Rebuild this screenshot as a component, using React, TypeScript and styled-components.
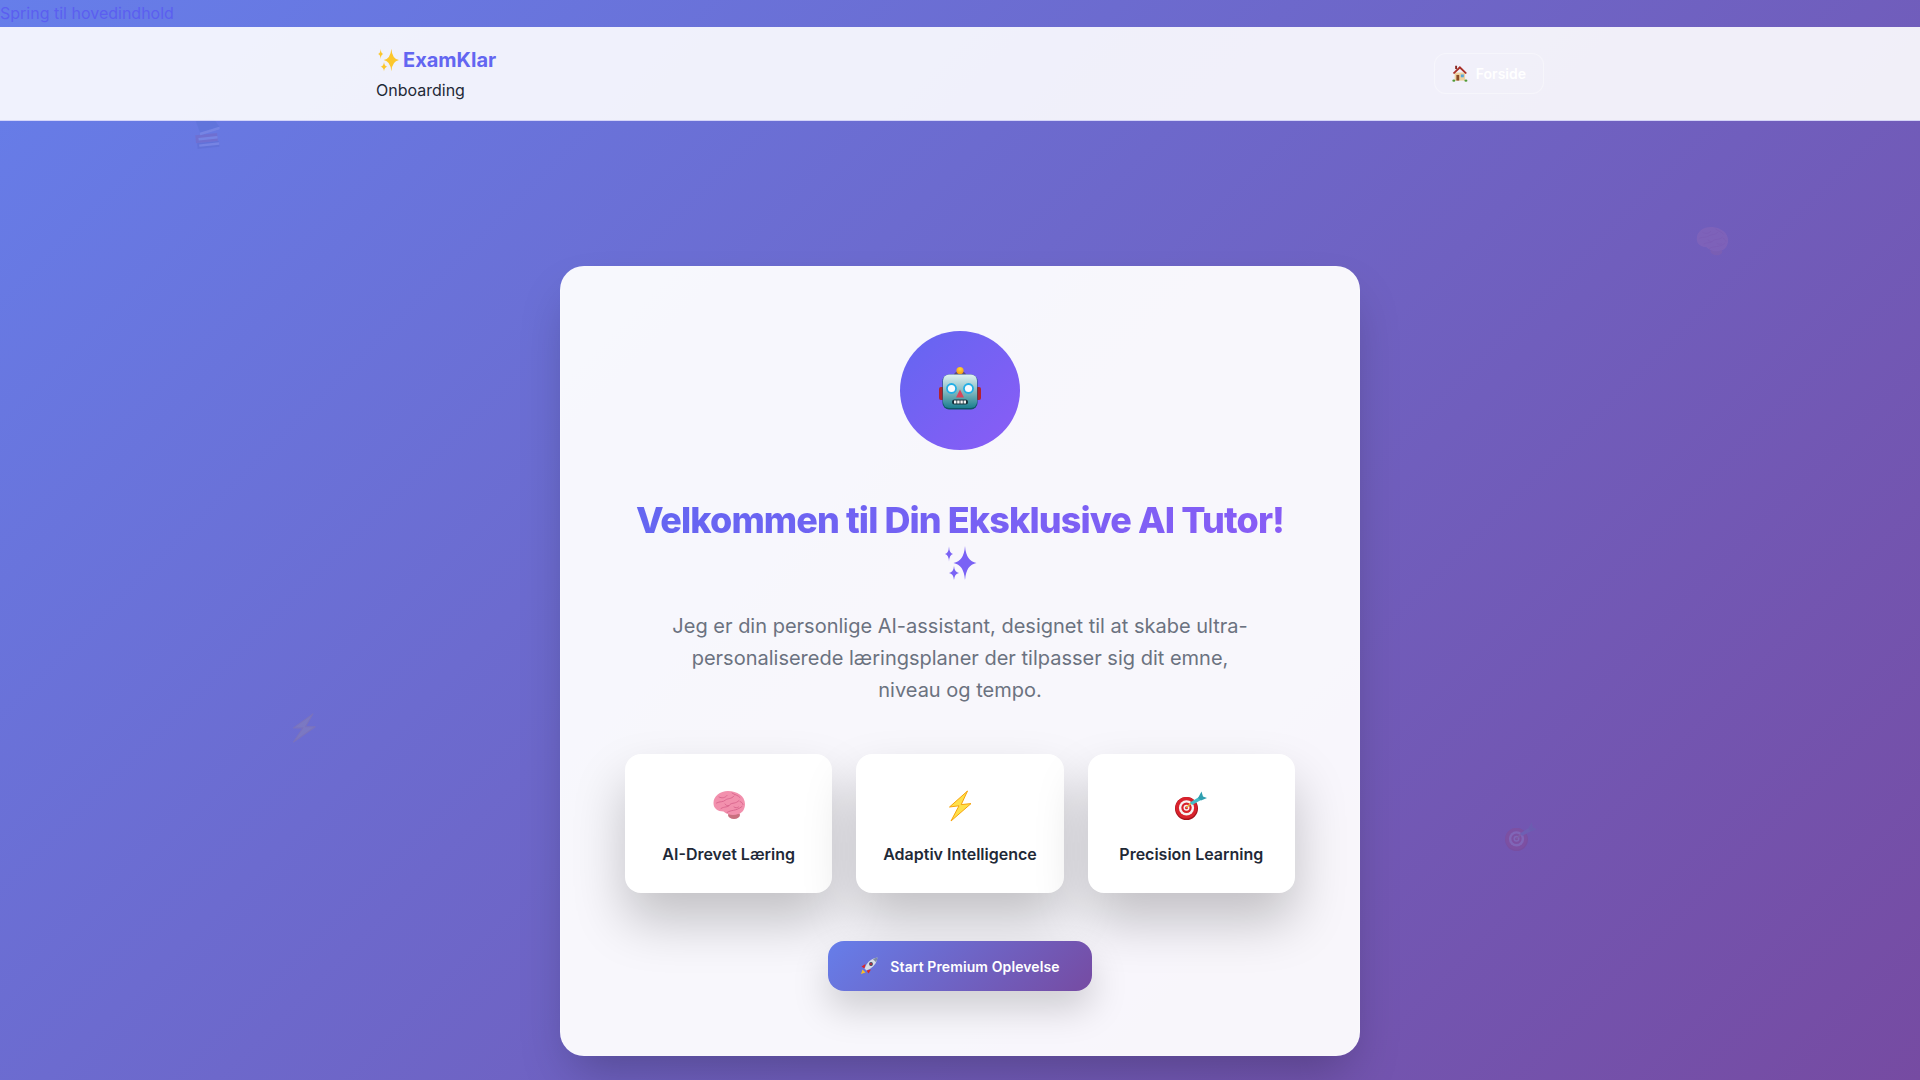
import { FC } from "react";
import styled, { createGlobalStyle } from "styled-components";

const GlobalStyle = createGlobalStyle`
* { box-sizing: border-box; }
html, body { margin: 0; padding: 0; }
body {
    font-family: Inter, "Noto Sans", sans-serif;
    background: linear-gradient(135deg, #667eea 0%, #764ba2 100%);
    min-height: 1080px;
    overflow: hidden;
}
`;

const Page = styled.div`
position: relative;
height: 1080px;
overflow: hidden;
`;

const SkipLink = styled.a`
display: block;
height: 27px;
font-size: 16px;
line-height: 26px;
color: #5b5ff0;
`;

const Header = styled.header`
position: relative;
z-index: 2;
height: 94px;
background: rgba(255, 255, 255, 0.9);
border-bottom: 1px solid rgba(99, 102, 241, 0.2);
`;

const HeaderInner = styled.div`
max-width: 1200px;
height: 100%;
margin: 0 auto;
padding: 0 16px;
display: flex;
align-items: center;
justify-content: space-between;
`;

const Brand = styled.div`
display: flex;
flex-direction: column;
gap: 3px;
`;

const Logo = styled.div`
display: flex;
align-items: center;
gap: 3px;
font-size: 20px;
line-height: 30px;
font-weight: 700;
color: #6366f1;
`;

const Subtitle = styled.div`
font-size: 16px;
line-height: 24px;
color: #1f2937;
`;

const HomeButton = styled.a`
display: flex;
align-items: center;
gap: 8px;
width: 110px;
height: 41px;
padding: 0 17px;
border: 1px solid rgba(255, 255, 255, 0.35);
border-radius: 12px;
background: rgba(255, 255, 255, 0.05);
color: #ffffff;
font-size: 14px;
font-weight: 600;
`;

const Floating = styled.span<{ $x: number; $y: number; $rotate: number }>`
position: absolute;
left: ${(p) => p.$x}px;
top: ${(p) => p.$y}px;
line-height: 0;
opacity: 0.1;
transform: rotate(${(p) => p.$rotate}deg);
`;

const Main = styled.main`
display: flex;
justify-content: center;
padding-top: 145px;
`;

const Card = styled.section`
width: 800px;
height: 790px;
padding: 64px;
border: 1px solid rgba(255, 255, 255, 0.2);
border-radius: 24px;
background: rgba(255, 255, 255, 0.95);
box-shadow: 0 25px 50px -12px rgba(0, 0, 0, 0.25);
display: flex;
flex-direction: column;
align-items: center;
text-align: center;
`;

const Avatar = styled.div`
width: 120px;
height: 120px;
border-radius: 50%;
background: linear-gradient(135deg, #6366f1, #8b5cf6);
display: flex;
align-items: center;
justify-content: center;
`;

const Title = styled.h1`
margin: 48px 0 24px;
font-size: 36px;
line-height: 44px;
font-weight: 800;
letter-spacing: -0.9px;
background: linear-gradient(135deg, #6366f1, #8b5cf6);
-webkit-background-clip: text;
background-clip: text;
color: transparent;
`;

const TitleSparkle = styled.span`
display: block;
height: 44px;
padding-top: 3px;
line-height: 0;
`;

const Lead = styled.p`
margin: 0 0 48px;
max-width: 600px;
font-size: 20px;
line-height: 32px;
color: #6b7280;
`;

const Features = styled.div`
width: 100%;
display: grid;
grid-template-columns: repeat(3, 1fr);
gap: 24px;
margin-bottom: 48px;
`;

const Feature = styled.div`
height: 139px;
padding: 36px 16px 0;
border-radius: 16px;
background: #ffffff;
box-shadow: 0 28px 52px rgba(0, 0, 0, 0.22);
`;

const FeatureIcon = styled.div`
height: 32px;
line-height: 0;
margin-bottom: 20px;
`;

const FeatureName = styled.div`
font-size: 16px;
line-height: 24px;
font-weight: 600;
color: #1f2937;
`;

const StartButton = styled.button`
width: 264px;
height: 50px;
border: 0;
border-radius: 16px;
background: linear-gradient(135deg, #667eea, #764ba2);
color: #ffffff;
font-family: inherit;
font-size: 14px;
font-weight: 600;
letter-spacing: 0.1px;
display: flex;
align-items: center;
justify-content: center;
gap: 12px;
box-shadow: 0 18px 36px rgba(0, 0, 0, 0.17);
`;

type IconProps = { size: number };

const star = (cx: number, cy: number, hw: number, hh: number) => {
    const k = 0.1;
    const ox = hw * k;
    const oy = hh * k;
    return `M${cx} ${cy - hh}Q${cx + ox} ${cy - oy} ${cx + hw} ${cy}Q${cx + ox} ${cy + oy} ${cx} ${cy + hh}Q${cx - ox} ${cy + oy} ${cx - hw} ${cy}Q${cx - ox} ${cy - oy} ${cx} ${cy - hh}Z`;
};

const Sparkles: FC<IconProps & { fill: string }> = ({ size, fill }) => (
    <svg width={size} height={size} viewBox="0 0 36 36">
        <path fill={fill} d={star(23, 18, 11.5, 17)} />
        <path fill={fill} d={star(7, 9, 4, 7.5)} />
        <path fill={fill} d={star(12, 28, 5, 7)} />
    </svg>
);

const Robot: FC<IconProps> = ({ size }) => (
    <svg width={size} height={size} viewBox="0 0 48 48">
        <defs>
            <linearGradient id="robotHead" x1="0" y1="0" x2="0" y2="1">
                <stop offset="0" stopColor="#dff1f2" />
                <stop offset="0.45" stopColor="#8fc0c6" />
                <stop offset="1" stopColor="#1c7f90" />
            </linearGradient>
            <radialGradient id="robotBall" cx="0.5" cy="0.3" r="0.7">
                <stop offset="0" stopColor="#ffd83a" />
                <stop offset="1" stopColor="#f59a12" />
            </radialGradient>
        </defs>
        <rect x="3" y="20" width="5" height="13" rx="2" fill="#b3242c" />
        <rect x="40" y="20" width="5" height="13" rx="2" fill="#b3242c" />
        <path d="M18 8.5C18 5 21 4.5 24 4.5S30 5 30 8.5Z" fill="#5a4a7a" />
        <circle cx="24" cy="3.6" r="3.6" fill="url(#robotBall)" />
        <rect x="6.5" y="7.5" width="35" height="35" rx="6.5" fill="#0f5666" />
        <rect x="7" y="7.5" width="34" height="33.5" rx="6" fill="url(#robotHead)" />
        <circle cx="15.5" cy="21.5" r="5.4" fill="#21aee6" />
        <circle cx="32.5" cy="21.5" r="5.4" fill="#21aee6" />
        <circle cx="15.5" cy="21.5" r="3.6" fill="#f6fbff" />
        <circle cx="32.5" cy="21.5" r="3.6" fill="#f6fbff" />
        <path d="M24 22.5L28 30.5H20Z" fill="#d8445c" />
        <rect x="16" y="32.5" width="16" height="5" rx="2.5" fill="#17323c" />
        <rect x="18" y="33.5" width="2.4" height="3" fill="#f4f4f4" />
        <rect x="21.2" y="33.5" width="2.4" height="3" fill="#f4f4f4" />
        <rect x="24.4" y="33.5" width="2.4" height="3" fill="#f4f4f4" />
        <rect x="27.6" y="33.5" width="2.4" height="3" fill="#f4f4f4" />
    </svg>
);

const Brain: FC<IconProps> = ({ size }) => (
    <svg width={size} height={size} viewBox="0 0 32 32">
        <ellipse cx="21" cy="25" rx="6" ry="4" fill="#c9707f" />
        <path d="M0.5 13C0.5 6 7 1 15 1C24 1 32 6 32 14C32 19.5 29 23.5 25 24C21 26 14 25 10.5 21.5C4.5 21.5 0.5 18.5 0.5 13Z" fill="#f290ad" />
        <path d="M6 7C9 8.5 12 8 14 5.5M3.5 13C7 11 10 12.5 12.5 10C15 8 18 9.5 21 6M8 18.5C11.5 16 15 18 17 14.5C19 12.5 23 14 26 10.5M14 22.5C18 19.5 23 21.5 29 16.5M19 3C21.5 5 25 5 27 7.5M12 14C13 15.5 14 16 16 15.5M21 17C22.5 18 24 18 25.5 17M27 11.5C28.5 12 29.5 13 30 14.5" fill="none" stroke="#d8648c" strokeWidth="0.9" strokeLinecap="round" />
    </svg>
);

const Bolt: FC<IconProps> = ({ size }) => (
    <svg width={size} height={size} viewBox="0 0 32 32">
        <path d="M23.5 1L5.5 17L15 15.8L7 31L27 13.6L17.2 14.6Z" fill="#ffe04a" stroke="#f7a30c" strokeWidth="1" strokeLinejoin="round" />
    </svg>
);

const Target: FC<IconProps> = ({ size }) => (
    <svg width={size} height={size} viewBox="0 0 32 32">
        <circle cx="11.5" cy="18.5" r="11.5" fill="#a5121c" />
        <circle cx="11.3" cy="17.8" r="10.8" fill="#d9222c" />
        <circle cx="11.5" cy="17.8" r="7.6" fill="#f7f3f3" />
        <circle cx="11.5" cy="17.8" r="5.2" fill="#d9222c" />
        <circle cx="11.5" cy="17.8" r="3" fill="#f7f3f3" />
        <circle cx="11.5" cy="17.8" r="1.5" fill="#d9222c" />
        <path d="M11.5 17.8L16 13" stroke="#e8b23c" strokeWidth="1.4" />
        <path d="M15 12.5L24 7L26 10L17 15Z" fill="#45bcc8" />
        <path d="M23 8L26.5 1.5L28 6.5L32 8L26 10.5Z" fill="#2f9fb0" />
    </svg>
);

const Rocket: FC<IconProps> = ({ size }) => (
    <svg width={size} height={size} viewBox="0 0 18 18">
        <path d="M1 17L2.5 12.5L5.5 15.5Z" fill="#fbbf24" />
        <path d="M1.5 9.5L5.5 7L4.5 11.5Z" fill="#dc2626" />
        <path d="M8.5 16.5L11 12.5L6.5 13.5Z" fill="#dc2626" />
        <path d="M17.5 0.5C13 1 9 3.5 6.5 7.5L4.5 11.5L6.5 13.5L10.5 11.5C14.5 9 17 5 17.5 0.5Z" fill="#d8dde6" />
        <path d="M17.5 0.5C15.5 0.7 14 1.5 13 2.2L15.8 5C16.6 4 17.3 2.5 17.5 0.5Z" fill="#7e8ba3" />
        <circle cx="11" cy="7" r="1.9" fill="#3b4257" />
        <circle cx="11" cy="7" r="1.1" fill="#c4303c" />
    </svg>
);

const House: FC<IconProps> = ({ size }) => (
    <svg width={size} height={size} viewBox="0 0 16 18">
        <rect x="2.5" y="8" width="11" height="8.5" fill="#efd2a0" />
        <path d="M0.5 8.5L8 1L15.5 8.5L14 9.5L8 4L2 9.5Z" fill="#a92f28" />
        <rect x="3" y="0.8" width="2" height="3.5" fill="#8a2a24" />
        <rect x="4.3" y="10.5" width="3" height="6" fill="#8a4a25" />
        <rect x="9" y="10" width="3.2" height="3" fill="#58a6d8" />
        <ellipse cx="1.6" cy="16.6" rx="1.6" ry="1.2" fill="#4f9a36" />
        <ellipse cx="14.4" cy="16.6" rx="1.6" ry="1.2" fill="#4f9a36" />
    </svg>
);

const Books: FC<IconProps> = ({ size }) => (
    <svg width={size} height={size} viewBox="0 0 32 32">
        <path d="M5 25H27V31H5Z" fill="#2f3f8f" />
        <path d="M7 26.5H27V29H7Z" fill="#f2f2f8" />
        <path d="M4 17H26V25H4Z" fill="#b02a4a" />
        <path d="M7 20H26V22.5H7Z" fill="#f2f2f8" />
        <path d="M6 3L24 2L29 11L9 15Z" fill="#2f5aa8" />
        <path d="M9 15L29 11V13.5L9 17.5Z" fill="#f2f2f8" />
    </svg>
);

const features = [
    { icon: <Brain size={32} />, name: "AI-Drevet Læring" },
    { icon: <Bolt size={32} />, name: "Adaptiv Intelligence" },
    { icon: <Target size={32} />, name: "Precision Learning" },
];

export const App: FC = () => {
    return (
        <>
            <GlobalStyle />
            <Page>
                <SkipLink>Spring til hovedindhold</SkipLink>
                <Header>
                    <HeaderInner>
                        <Brand>
                            <Logo><Sparkles size={24} fill="#fcc72c" /><span>ExamKlar</span></Logo>
                            <Subtitle>Onboarding</Subtitle>
                        </Brand>
                        <HomeButton><House size={17} /><span>Forside</span></HomeButton>
                    </HeaderInner>
                </Header>
                <Floating $x={191} $y={117} $rotate={-6}><Books size={32} /></Floating>
                <Floating $x={1696} $y={226} $rotate={4}><Brain size={32} /></Floating>
                <Floating $x={288} $y={712} $rotate={6}><Bolt size={32} /></Floating>
                <Floating $x={1505} $y={821} $rotate={0}><Target size={32} /></Floating>
                <Main>
                    <Card>
                        <Avatar><Robot size={48} /></Avatar>
                        <Title>
                            Velkommen til Din Eksklusive AI Tutor!
                            <TitleSparkle><Sparkles size={36} fill="#7a62f5" /></TitleSparkle>
                        </Title>
                        <Lead>Jeg er din personlige AI-assistant, designet til at skabe ultra-personaliserede læringsplaner der tilpasser sig dit emne, niveau og tempo.</Lead>
                        <Features>
                            {features.map((f) => (
                                <Feature key={f.name}>
                                    <FeatureIcon>{f.icon}</FeatureIcon>
                                    <FeatureName>{f.name}</FeatureName>
                                </Feature>
                            ))}
                        </Features>
                        <StartButton><Rocket size={18} /><span>Start Premium Oplevelse</span></StartButton>
                    </Card>
                </Main>
            </Page>
        </>
    );
};

export default App;
